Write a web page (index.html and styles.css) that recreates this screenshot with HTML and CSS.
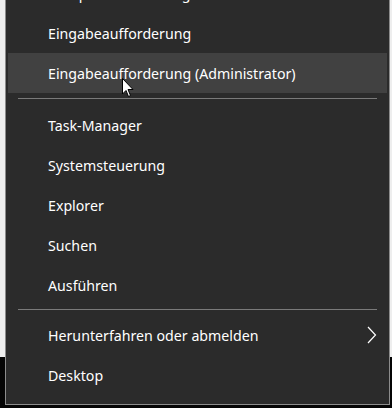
FILE: index.html
```html
<!DOCTYPE html>
<html lang="de">
<head>
  <meta charset="UTF-8">
  <title>Schnellzugriff-Menü</title>
  <link rel="stylesheet" href="styles.css">
</head>
<body>
<div class="screen">
  <div class="menu">
    <div class="item">Computerverwaltung</div>
    <div class="item">Eingabeaufforderung</div>
    <div class="item hover">Eingabeaufforderung (Administrator)</div>
    <div class="separator"></div>
    <div class="item">Task-Manager</div>
    <div class="item">Systemsteuerung</div>
    <div class="item">Explorer</div>
    <div class="item">Suchen</div>
    <div class="item">Ausführen</div>
    <div class="separator second"></div>
    <div class="item has-sub">
      Herunterfahren oder abmelden
      <svg class="chevron" width="10" height="18" viewBox="0 0 10 18">
        <path d="M1 1 L8.5 9 L1 17" fill="none" stroke="#fff" stroke-width="1.2"/>
      </svg>
    </div>
    <div class="item">Desktop</div>
  </div>

  <!-- mouse pointer -->
  <svg class="cursor" width="13" height="20" viewBox="0 0 13 20">
    <path d="M0.5 0.5 L0.5 16 L4 12.5 L6.5 18.5 L8.5 17.5 L6 11.5 L11 11.5 Z" fill="#fff" stroke="#000" stroke-width="1"/>
  </svg>
</div>
</body>
</html>
```

FILE: styles.css
```css
body {
    margin: 0;
    padding: 0;
    background: #000;
    font-family: "Noto Sans", "Segoe UI", Arial, sans-serif;
}

.screen {
    position: relative;
    width: 392px;
    height: 408px;
    overflow: hidden;
    background: linear-gradient(#eeeeee 0, #eeeeee 357px, #050505 357px);
}

.menu {
    margin-top: -27px;
    margin-left: 5px;
    width: 381px;
    padding: 0 1px 9px 1px;
    background: #2b2b2b;
    border: 1px solid #8c8c8c;
    border-top: none;
}

.item {
    display: flex;
    align-items: center;
    justify-content: space-between;
    height: 40px;
    margin: 0 1px;
    padding: 0 10px 0 40px;
    color: #fff;
    font-size: 14.2px;
}

.item.hover {
    background: #414141;
}

.chevron {
    display: block;
}

.separator {
    height: 1px;
    margin: 5px 11px 6px 11px;
    background: #7a7a7a;
}

.separator.second {
    margin-top: 4px;
    margin-bottom: 5px;
}

.cursor {
    position: absolute;
    left: 122px;
    top: 78px;
}
```
